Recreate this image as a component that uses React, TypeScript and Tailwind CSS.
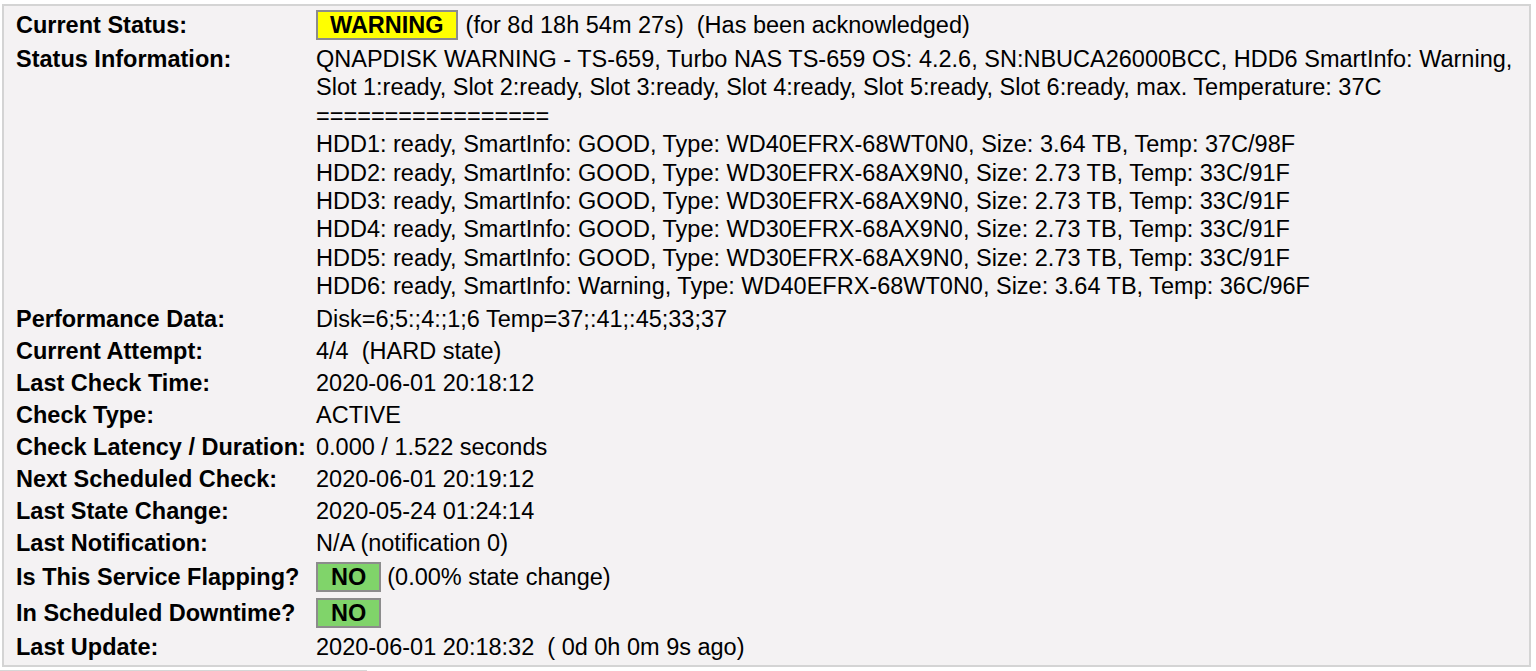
import React, { FC, ReactNode } from 'react';

const Row: FC<{ label: string; children: ReactNode; badge?: boolean; top?: boolean }> = ({ label, children, badge, top }) => (
  <div className={`flex ${badge ? 'py-[3px]' : 'py-[2px]'}`}>
    <div className={`w-[300px] shrink-0 font-bold leading-[28px] ${top ? 'self-start' : 'self-center'}`}>{label}</div>
    <div className="flex-1 leading-[28px]">{children}</div>
  </div>
);

const hdds = [
  'HDD1: ready, SmartInfo: GOOD, Type: WD40EFRX-68WT0N0, Size: 3.64 TB, Temp: 37C/98F',
  'HDD2: ready, SmartInfo: GOOD, Type: WD30EFRX-68AX9N0, Size: 2.73 TB, Temp: 33C/91F',
  'HDD3: ready, SmartInfo: GOOD, Type: WD30EFRX-68AX9N0, Size: 2.73 TB, Temp: 33C/91F',
  'HDD4: ready, SmartInfo: GOOD, Type: WD30EFRX-68AX9N0, Size: 2.73 TB, Temp: 33C/91F',
  'HDD5: ready, SmartInfo: GOOD, Type: WD30EFRX-68AX9N0, Size: 2.73 TB, Temp: 33C/91F',
  'HDD6: ready, SmartInfo: Warning, Type: WD40EFRX-68WT0N0, Size: 3.64 TB, Temp: 36C/96F',
];

const App: FC = () => {
  return (
    <div className="bg-white min-h-screen pt-[4px] text-black text-[23.5px]" style={{ fontFamily: '"Liberation Sans", Arial, Helvetica, sans-serif' }}>
      <div className="ml-[2px] w-[1529px] border-2 border-[#d4d4d4] bg-[#f4f2f3] pl-[12px] pt-[1px] pb-[2px]">
        <Row label="Current Status:" badge>
          <div className="flex items-center">
            <span className="h-[30px] px-[12px] border-2 border-[#8c8c8c] bg-[#ffff00] font-bold leading-[26px]">WARNING</span>
            <span className="ml-[8px]">(for 8d 18h 54m 27s)&nbsp; (Has been acknowledged)</span>
          </div>
        </Row>
        <Row label="Status Information:" top>
          <div className="leading-[28.4px]">
            <div>QNAPDISK WARNING - TS-659, Turbo NAS TS-659 OS: 4.2.6, SN:NBUCA26000BCC, HDD6 SmartInfo: Warning,</div>
            <div>Slot 1:ready, Slot 2:ready, Slot 3:ready, Slot 4:ready, Slot 5:ready, Slot 6:ready, max. Temperature: 37C</div>
            <div>=================</div>
            {hdds.map((h) => (
              <div key={h}>{h}</div>
            ))}
          </div>
        </Row>
        <Row label="Performance Data:">Disk=6;5:;4:;1;6 Temp=37;:41;:45;33;37</Row>
        <Row label="Current Attempt:">4/4&nbsp; (HARD state)</Row>
        <Row label="Last Check Time:">2020-06-01 20:18:12</Row>
        <Row label="Check Type:">ACTIVE</Row>
        <Row label="Check Latency / Duration:">0.000 / 1.522 seconds</Row>
        <Row label="Next Scheduled Check:">2020-06-01 20:19:12</Row>
        <Row label="Last State Change:">2020-05-24 01:24:14</Row>
        <Row label="Last Notification:">N/A (notification 0)</Row>
        <Row label="Is This Service Flapping?" badge>
          <div className="flex items-center">
            <span className="h-[30px] px-[13px] border-2 border-[#8c8c8c] bg-[#80d46a] font-bold leading-[26px]">NO</span>
            <span className="ml-[6px]">(0.00% state change)</span>
          </div>
        </Row>
        <Row label="In Scheduled Downtime?" badge>
          <div className="flex items-center">
            <span className="h-[30px] px-[13px] border-2 border-[#8c8c8c] bg-[#80d46a] font-bold leading-[26px]">NO</span>
          </div>
        </Row>
        <Row label="Last Update:">2020-06-01 20:18:32&nbsp; ( 0d 0h 0m 9s ago)</Row>
      </div>
      <div className="mt-[3px] w-[367px] border-t-2 border-[#d6d6d6]" />
    </div>
  );
};

export default App;
